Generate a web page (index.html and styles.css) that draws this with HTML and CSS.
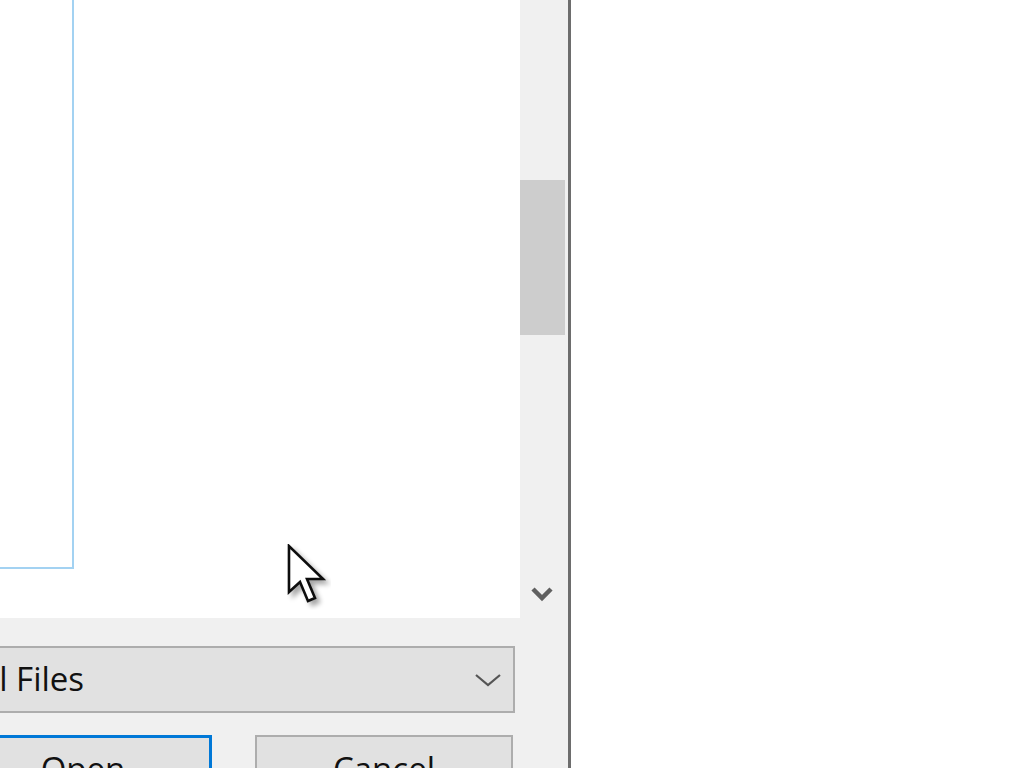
FILE: index.html
```html
<!DOCTYPE html>
<html lang="en">
<head>
    <meta charset="UTF-8">
    <title>Open File</title>
    <link rel="stylesheet" href="styles.css">
</head>
<body>
    <div class="dialog">
        <div class="browser">
            <div class="list">
                <div class="frame"></div>
            </div>
            <div class="scrollbar">
                <div class="thumb"></div>
                <div class="arrow-down">
                    <svg width="24" height="16" viewBox="0 0 24 16">
                        <polyline points="3,3 12,12 21,3" fill="none" stroke="#606060" stroke-width="4.5"/>
                    </svg>
                </div>
            </div>
        </div>

        <div class="controls">
            <div class="combo">
                <span class="combo-text">All Files</span>
                <svg class="combo-arrow" width="30" height="18" viewBox="0 0 30 18">
                    <polyline points="3,4 15,14 27,4" fill="none" stroke="#555" stroke-width="2.2"/>
                </svg>
            </div>
            <div class="buttons">
                <button class="btn btn-default">Open</button>
                <button class="btn">Cancel</button>
            </div>
        </div>
    </div>

    <div class="outside"></div>

    <!-- mouse pointer over the list -->
    <svg class="cursor" width="44" height="66" viewBox="0 0 44 66">
        <defs>
            <filter id="shadow" x="-30%" y="-30%" width="160%" height="160%">
                <feGaussianBlur in="SourceAlpha" stdDeviation="2.5"/>
                <feOffset dx="4" dy="4"/>
                <feComponentTransfer><feFuncA type="linear" slope="0.35"/></feComponentTransfer>
                <feMerge><feMergeNode/><feMergeNode in="SourceGraphic"/></feMerge>
            </filter>
        </defs>
        <polygon points="2,2 2,48 13,38 21,57 28,54 20,35 36,35" fill="#fff" stroke="#111" stroke-width="2.6" stroke-linejoin="miter" filter="url(#shadow)"/>
    </svg>
</body>
</html>
```

FILE: styles.css
```css
* {
    margin: 0;
    padding: 0;
    box-sizing: border-box;
}

body {
    display: flex;
    height: 768px;
    overflow: hidden;
    background-color: #ffffff;
    font-family: 'Open Sans', 'Noto Sans', sans-serif;
}

.dialog {
    width: 571px;
    flex-shrink: 0;
    background-color: #f0f0f0;
    border-right: 3px solid #6d6d6d;
    display: flex;
    flex-direction: column;
    overflow: hidden;
}

.browser {
    display: flex;
    height: 618px;
    flex-shrink: 0;
}

.list {
    width: 520px;
    background-color: #ffffff;
}

.frame {
    width: 74px;
    height: 569px;
    border-right: 2px solid #a3d2f2;
    border-bottom: 2px solid #a3d2f2;
}

.scrollbar {
    width: 48px;
    display: flex;
    flex-direction: column;
}

.thumb {
    margin-top: 180px;
    width: 45px;
    height: 155px;
    background-color: #cdcdcd;
}

.arrow-down {
    margin-top: 251px;
    padding-left: 10px;
}

.arrow-down svg {
    display: block;
}

.controls {
    flex-shrink: 0;
    padding-top: 28px;
    margin-left: -100px;
}

.combo {
    width: 615px;
    height: 67px;
    background-color: #e1e1e1;
    border: 2px solid #adadad;
    display: flex;
    align-items: center;
    justify-content: space-between;
    padding: 0 10px 2px 68px;
}

.combo-text {
    font-size: 33px;
    color: #111;
}

.combo-arrow {
    margin-top: 2px;
}

.buttons {
    display: flex;
    gap: 43px;
    margin-top: 22px;
    padding-left: 54px;
}

.btn {
    width: 258px;
    height: 70px;
    flex-shrink: 0;
    background-color: #e1e1e1;
    border: 2px solid #adadad;
    font-family: 'Open Sans', 'Noto Sans', sans-serif;
    font-size: 33px;
    color: #111;
    padding-bottom: 4px;
}

.btn-default {
    border: 3px solid #0078d7;
}

.outside {
    flex: 1;
    background-color: #ffffff;
}

.cursor {
    position: absolute;
    left: 287px;
    top: 544px;
}
```
